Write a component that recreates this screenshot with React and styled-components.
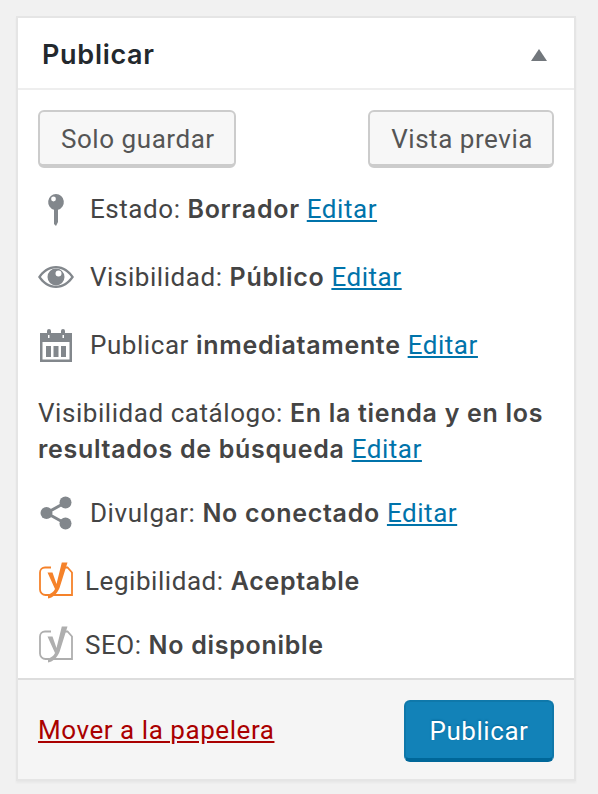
import React from "react";
import styled, { createGlobalStyle } from "styled-components";

const GlobalStyle = createGlobalStyle`
  html, body {
    margin: 0;
    padding: 0;
    background: #f1f1f1;
  }
  * {
    box-sizing: border-box;
  }
`;

const Page = styled.div`
  width: 598px;
  height: 794px;
  padding: 16px 22px 0 16px;
  font-family: Roboto, "Liberation Sans", sans-serif;
  font-size: 26px;
  letter-spacing: 0.55px;
  color: #444;
`;

const Box = styled.section`
  width: 560px;
  height: 765px;
  display: flex;
  flex-direction: column;
  background: #fff;
  border: 2px solid #e5e5e5;
  box-shadow: 0 2px 2px rgba(0, 0, 0, 0.04);
`;

const Header = styled.header`
  height: 72px;
  flex: none;
  display: flex;
  align-items: center;
  justify-content: space-between;
  padding: 2px 27px 0 24px;
  border-bottom: 2px solid #eee;
`;

const Title = styled.h2`
  margin: 0;
  font-family: Inter, Roboto, sans-serif;
  font-size: 27px;
  font-weight: 600;
  letter-spacing: 0.7px;
  color: #23282d;
`;

const Caret = styled.svg`
  margin-top: 2px;
`;

const Body = styled.div`
  flex: 1;
  padding: 20px 20px 0;
`;

const Actions = styled.div`
  display: flex;
  justify-content: space-between;
  margin-bottom: 23px;
`;

const Button = styled.button`
  height: 58px;
  padding: 2px 19px 0 21px;
  font: inherit;
  letter-spacing: inherit;
  color: #555;
  background: #f7f7f7;
  border: 2px solid #ccc;
  border-bottom-width: 4px;
  border-radius: 6px;
`;

const Row = styled.div`
  display: flex;
  align-items: center;
  min-height: 36px;
  line-height: 36px;
  margin-bottom: ${(p) => p.$gap ?? 32}px;
`;

const IconCell = styled.span`
  flex: none;
  width: ${(p) => p.$width ?? 52}px;
  display: flex;
  align-items: center;
`;

const Text = styled.div`
  strong {
    font-family: Inter, Roboto, sans-serif;
    font-size: 25px;
    font-weight: 600;
    letter-spacing: 0.7px;
  }
`;

const Link = styled.a`
  color: #0073aa;
  text-decoration: underline;
`;

const Footer = styled.footer`
  height: 101px;
  flex: none;
  display: flex;
  align-items: center;
  justify-content: space-between;
  padding: 0 20px;
  background: #f5f5f5;
  border-top: 2px solid #ddd;
`;

const TrashLink = styled.a`
  color: #a00;
  text-decoration: underline;
`;

const PrimaryButton = styled.button`
  width: 150px;
  height: 62px;
  margin-top: 2px;
  padding: 2px 0 0;
  font: inherit;
  letter-spacing: inherit;
  color: #fff;
  background: #1282b8;
  border: 2px solid #0f78aa;
  border-bottom: 4px solid #006799;
  border-radius: 6px;
  text-shadow: 0 -1px 2px #006799;
`;

const Pin = () => (
  <svg width="20" height="34" viewBox="0 0 20 34" style={{ marginLeft: 8, marginTop: 1 }}>
    <path
      fill="#82878c"
      fillRule="evenodd"
      d="M10 1a8 8 0 0 1 2 15.7V29l-2 4-2-2V16.7A8 8 0 0 1 10 1zM7.500 3.600a2.400 2.400 0 1 0 0 4.800 2.400 2.400 0 0 0 0-4.800z"
    />
  </svg>
);

const Eye = () => (
  <svg width="36" height="24" viewBox="0 0 36 24">
    <path
      fill="#82878c"
      fillRule="evenodd"
      d="M18 1c7.600 0 13.800 4.500 18 11-4.200 6.500-10.400 11-18 11S4.200 18.500 0 12C4.200 5.500 10.400 1 18 1zM18 3.300C11.800 3.300 6.600 6.800 2.900 12c3.700 5.200 8.900 8.700 15.100 8.700S29.400 17.200 33.100 12C29.400 6.800 24.200 3.300 18 3.300z"
    />
    <path
      fill="#82878c"
      fillRule="evenodd"
      d="M18 3.500a8.500 8.500 0 1 1 0 17 8.500 8.500 0 0 1 0-17zM20.500 5.500a3 3 0 1 0 0 6 3 3 0 0 0 0-6z"
    />
  </svg>
);

const Calendar = () => (
  <svg width="32" height="33" viewBox="0 0 32 33" style={{ marginLeft: 2 }}>
    <path
      fill="#82878c"
      fillRule="evenodd"
      d="M0 4h7V2a2 2 0 0 1 4 0v2h10V2a2 2 0 0 1 4 0v2h7v29H0zM2.500 13v17.500h27V13zM8 6v3h1.500V6zM22.500 6v3H24V6z"
    />
    <path fill="#82878c" d="M6 17h5v11H6zM13.500 17h5v11h-5zM21 17h5v11h-5z" />
  </svg>
);

const Share = () => (
  <svg width="32" height="34" viewBox="0 0 32 34" style={{ marginLeft: 2 }}>
    <circle cx="6.500" cy="17" r="6" fill="#82878c" />
    <circle cx="25.500" cy="6.500" r="6" fill="#82878c" />
    <circle cx="25.500" cy="27.500" r="6" fill="#82878c" />
    <path d="M6.500 17 25.500 6.500M6.500 17l19 10.500" stroke="#82878c" strokeWidth="3" />
  </svg>
);

const Yoast = ({ color }) => (
  <svg width="34" height="37" viewBox="0 0 34 37" style={{ marginLeft: 1 }}>
    <path
      fill="none"
      stroke={color}
      strokeWidth="1.800"
      d="M12 5.500H6a5 5 0 0 0-5 5v17a5.500 5.500 0 0 0 5.500 5.500H10M26 5.500h2.500l4.500 5V33H14"
    />
    <path
      fill={color}
      d="M8.500 10.500h5L17.500 22 22.800 0.500h5.700L20.500 26c-2 5-6 9.500-11.500 10.500v-4c3-.5 5.800-2.800 7-5.500z"
    />
  </svg>
);

export default function App() {
  return (
    <Page>
      <GlobalStyle />
      <Box>
        <Header>
          <Title>Publicar</Title>
          <Caret width="16" height="12" viewBox="0 0 16 12">
            <path d="M8 0l8 12H0z" fill="#72777c" />
          </Caret>
        </Header>
        <Body>
          <Actions>
            <Button>Solo guardar</Button>
            <Button>Vista previa</Button>
          </Actions>
          <Row>
            <IconCell><Pin /></IconCell>
            <Text>Estado: <strong>Borrador</strong> <Link>Editar</Link></Text>
          </Row>
          <Row>
            <IconCell><Eye /></IconCell>
            <Text>Visibilidad: <strong>Público</strong> <Link>Editar</Link></Text>
          </Row>
          <Row>
            <IconCell><Calendar /></IconCell>
            <Text>Publicar <strong>inmediatamente</strong> <Link>Editar</Link></Text>
          </Row>
          <Row $gap={28}>
            <Text>
              Visibilidad catálogo: <strong>En la tienda y en los resultados de búsqueda</strong>{" "}
              <Link>Editar</Link>
            </Text>
          </Row>
          <Row $gap={31}>
            <IconCell><Share /></IconCell>
            <Text>Divulgar: <strong>No conectado</strong> <Link>Editar</Link></Text>
          </Row>
          <Row $gap={27}>
            <IconCell $width={47}><Yoast color="#f5822a" /></IconCell>
            <Text>Legibilidad: <strong>Aceptable</strong></Text>
          </Row>
          <Row $gap={0}>
            <IconCell $width={47}><Yoast color="#aeaeae" /></IconCell>
            <Text>SEO: <strong>No disponible</strong></Text>
          </Row>
        </Body>
        <Footer>
          <TrashLink>Mover a la papelera</TrashLink>
          <PrimaryButton>Publicar</PrimaryButton>
        </Footer>
      </Box>
    </Page>
  );
}
